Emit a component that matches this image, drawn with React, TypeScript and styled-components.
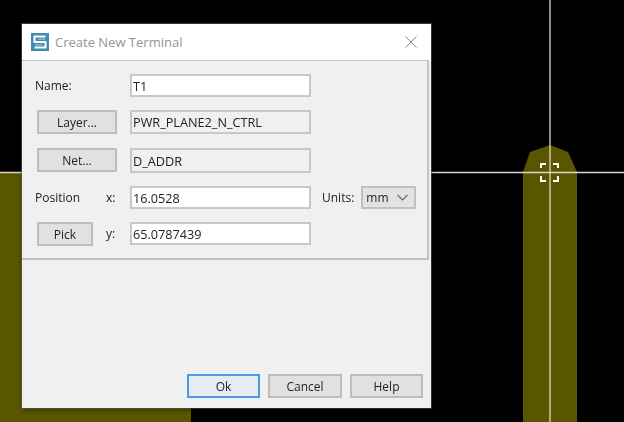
import { createGlobalStyle, styled } from "styled-components";

const GlobalStyle = createGlobalStyle`
    html, body {
        margin: 0;
        padding: 0;
        background: #000;
    }
`;

const Desktop = styled.div`
    position: relative;
    width: 624px;
    height: 422px;
    overflow: hidden;
    background: #000;
`;

const Canvas = styled.svg`
    position: absolute;
    left: 0;
    top: 0;
`;

const Dialog = styled.div`
    position: absolute;
    left: 22px;
    top: 24px;
    width: 409px;
    height: 384px;
    display: flex;
    flex-direction: column;
    background: #f0f0f0;
    box-shadow: 0 2px 5px rgba(0, 0, 0, 0.4), 0 0 0 1px rgba(130, 130, 130, 0.45);
    font-family: "Open Sans", "Liberation Sans", sans-serif;
    font-size: 12px;
    color: #222;
    filter: blur(0.4px);
`;

const TitleBar = styled.div`
    height: 36px;
    flex: none;
    display: flex;
    align-items: center;
    padding: 0 14px 0 9px;
    gap: 6px;
    background: #fff;
`;

const Title = styled.div`
    flex: 1;
    font-size: 13px;
    color: #959595;
`;

const Panel = styled.div`
    height: 200px;
    box-sizing: border-box;
    margin-right: 2px;
    padding: 13px 0 0 13px;
    flex: none;
    border: 1px solid #c2c2c2;
    border-left: 0;
    border-right-width: 2px;
    border-bottom-width: 2px;
    display: grid;
    grid-template-columns: 67px 28px 181px auto;
    grid-template-rows: 36px 38px 38px 36px 24px;
    align-items: start;
`;

const Label = styled.div<{ $axis?: boolean }>`
    line-height: 23px;
    white-space: nowrap;
    grid-column: ${(p) => (p.$axis ? "2" : "1")};
    padding-left: ${(p) => (p.$axis ? "4px" : "0")};
`;

const Field = styled.div<{ $readOnly?: boolean; $height?: number }>`
    height: ${(p) => p.$height ?? 23}px;
    grid-column: 3;
    box-sizing: border-box;
    display: flex;
    align-items: center;
    padding-left: 1px;
    font-size: 12.7px;
    border: 2px solid #c8c8c8;
    background: ${(p) => (p.$readOnly ? "#f0f0f0" : "#fff")};
`;

const Button = styled.div<{ $width?: number; $focus?: boolean }>`
    box-sizing: border-box;
    width: ${(p) => p.$width ?? 73}px;
    height: 24px;
    display: flex;
    align-items: center;
    justify-content: center;
    border: 2px solid ${(p) => (p.$focus ? "#4a9be0" : "#bdbdbd")};
    background: ${(p) => (p.$focus ? "#e5ecf3" : "#e1e1e1")};
`;

const PanelButton = styled(Button)<{ $span?: boolean }>`
    grid-column: ${(p) => (p.$span ? "1 / 3" : "1")};
    margin-left: 2px;
`;

const UnitsCell = styled.div`
    display: flex;
    align-items: center;
    gap: 7px;
    padding-left: 11px;
    height: 23px;
`;

const Combo = styled.div`
    box-sizing: border-box;
    width: 55px;
    height: 23px;
    display: flex;
    align-items: center;
    justify-content: space-between;
    padding: 0 6px 0 3px;
    border: 2px solid #c0c0c0;
    background: #e3e3e3;
`;

const Footer = styled.div`
    flex: 1;
    display: flex;
    justify-content: flex-end;
    align-items: flex-end;
    gap: 8px;
    padding: 0 8px 10px 0;
`;

function Logo() {
    return (
        <svg width="18" height="18" viewBox="0 0 18 18">
            <rect width="18" height="18" fill="#3f8cad" />
            <path d="M14.5 3.5H3.5V9H14.5V14.5H3.5" fill="none" stroke="#fff" strokeWidth="2" />
            <path d="M14 6.2H7M4 11.8H11" stroke="#8fc3d8" strokeWidth="1.2" />
        </svg>
    );
}

function Close() {
    return (
        <svg width="12" height="12" viewBox="0 0 12 12">
            <path d="M0.5 0.5L11.5 11.5M11.5 0.5L0.5 11.5" stroke="#8a8a8a" strokeWidth="1" />
        </svg>
    );
}

function Chevron() {
    return (
        <svg width="11" height="7" viewBox="0 0 11 7">
            <path d="M0.5 1L5.5 6L10.5 1" fill="none" stroke="#666" strokeWidth="1.1" />
        </svg>
    );
}

function App() {
    return (
        <Desktop>
            <GlobalStyle />
            <Canvas width="624" height="422" viewBox="0 0 624 422">
                <rect x="0" y="172" width="191" height="250" fill="#5a5600" />
                <path d="M523 172L530 152L550 145L568 152L577 172V422H523Z" fill="#5a5600" />
                <path d="M0 172.5H624M550 0V422" stroke="#d8d8d0" strokeWidth="1.3" />
                <path
                    d="M541 168V164H546M553 164H558V168M558 176V181H553M546 181H541V176"
                    fill="none"
                    stroke="#fff"
                    strokeWidth="2"
                />
            </Canvas>
            <Dialog>
                <TitleBar>
                    <Logo />
                    <Title>Create New Terminal</Title>
                    <Close />
                </TitleBar>
                <Panel>
                    <Label>Name:</Label>
                    <Field>T1</Field>
                    <PanelButton $span $width={80}>Layer...</PanelButton>
                    <Field $readOnly $height={24}>PWR_PLANE2_N_CTRL</Field>
                    <PanelButton $span $width={80}>Net...</PanelButton>
                    <Field $readOnly $height={25}>D_ADDR</Field>
                    <Label>Position</Label>
                    <Label $axis>x:</Label>
                    <Field>16.0528</Field>
                    <UnitsCell>
                        Units:
                        <Combo>
                            mm
                            <Chevron />
                        </Combo>
                    </UnitsCell>
                    <PanelButton $width={56}>Pick</PanelButton>
                    <Label $axis>y:</Label>
                    <Field>65.0787439</Field>
                </Panel>
                <Footer>
                    <Button $focus>Ok</Button>
                    <Button $width={74}>Cancel</Button>
                    <Button>Help</Button>
                </Footer>
            </Dialog>
        </Desktop>
    );
}

export default App;
